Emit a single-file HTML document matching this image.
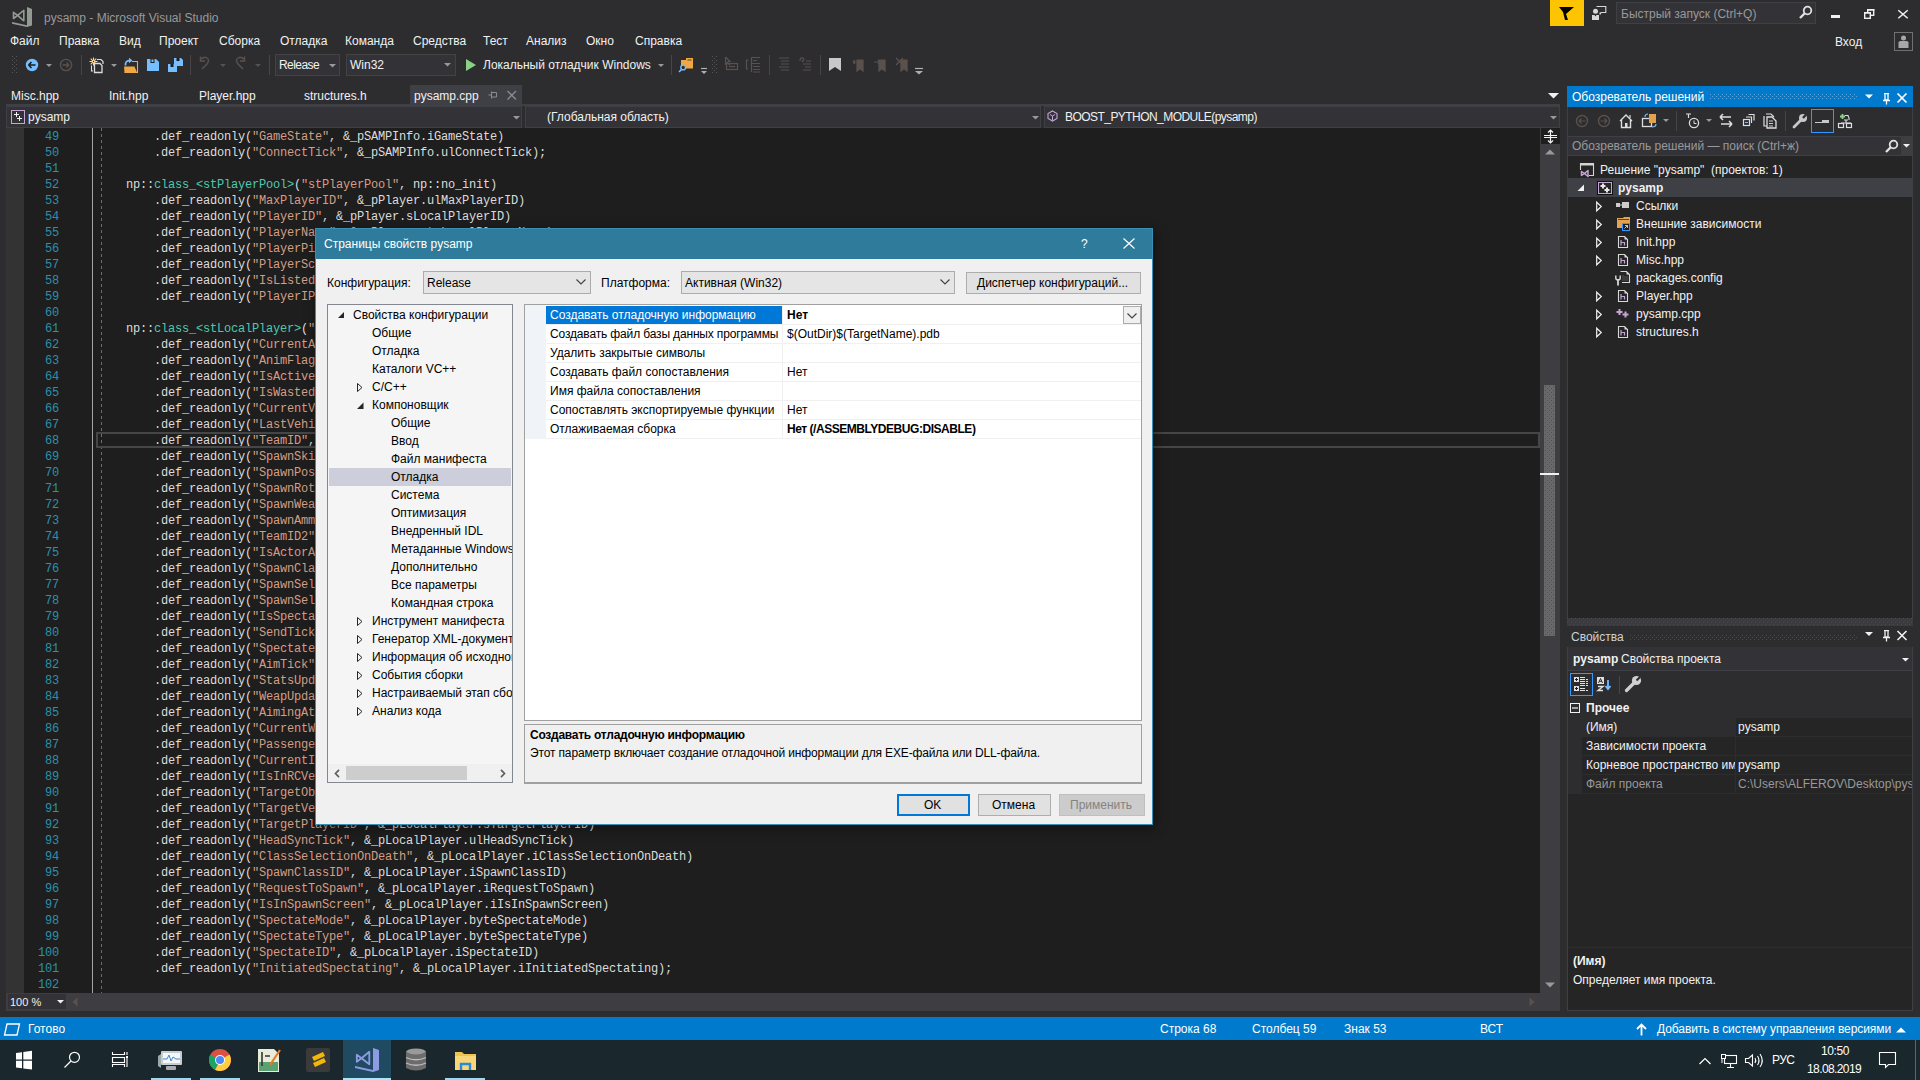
<!DOCTYPE html>
<html><head><meta charset="utf-8">
<style>
*{margin:0;padding:0;box-sizing:border-box}
html,body{width:1920px;height:1080px;overflow:hidden;background:#2d2d30;font-family:"Liberation Sans",sans-serif;font-size:12px;color:#f1f1f1}
.a{position:absolute}
.t{position:absolute;white-space:nowrap;line-height:14px}
.dk{color:#000}
#code{position:absolute;left:98px;top:129px;font-family:"Liberation Mono",monospace;font-size:12px;line-height:16px;white-space:pre;color:#dcdcdc;letter-spacing:-0.2px}
#code i{font-style:normal;color:#d69d85}
#code b{font-weight:normal;color:#4ec9b0}
#lnum{position:absolute;left:23px;width:36px;top:129px;font-family:"Liberation Mono",monospace;font-size:12px;line-height:16px;white-space:pre;color:#2b91af;text-align:right;letter-spacing:-0.2px}
</style></head><body>
<!-- ===== TITLE BAR ===== -->
<svg class="a" style="left:0;top:0" width="40" height="30" viewBox="0 0 40 30"><g fill="#919b91"><path d="M27 7 L32 9 V25.5 L27 27 Z"/><path d="M12 22 L27 25.3 V27 L12 23.7 Z"/></g><g fill="none" stroke="#919b91" stroke-width="1.6" stroke-linejoin="round"><path d="M13.5 12.3 V18.5 L17.6 15.3 Z"/><path d="M17.6 15.3 L23.8 10.3 V20.8 Z"/></g></svg>
<div class="t" style="left:44px;top:11px;color:#999999">pysamp - Microsoft Visual Studio</div>
<div class="a" style="left:1550px;top:0;width:34px;height:26px;background:#fdc501"></div>
<svg class="a" style="left:1559px;top:6px" width="16" height="15" viewBox="0 0 16 15"><path d="M0 1 H15 L7 8 L9 14 L6 14 L4 6 Z" fill="#000"/></svg>
<svg class="a" style="left:1590px;top:4px" width="20" height="18" viewBox="1590 4 20 18"><circle cx="1595.5" cy="11.3" r="2.5" fill="#d8d8d8"/><path d="M1592 15 H1594.5 L1595.5 16.5 L1596.5 15 H1599 V20 H1592 Z" fill="#d8d8d8"/><path d="M1596.5 6.5 H1605.8 V12.5 H1601 L1600 14.5 V12.5" fill="none" stroke="#d8d8d8" stroke-width="1.1"/></svg>
<div class="a" style="left:1616px;top:2px;width:200px;height:22px;background:#333337;border:1px solid #3f3f46"></div>
<div class="t" style="left:1621px;top:7px;color:#999999">Быстрый запуск (Ctrl+Q)</div>
<svg class="a" style="left:1799px;top:5px" width="14" height="14" viewBox="0 0 14 14"><circle cx="8.5" cy="5.5" r="3.8" fill="none" stroke="#e0e0e0" stroke-width="1.8"/><path d="M6 8 L1 13" stroke="#e0e0e0" stroke-width="2.4"/></svg>
<div class="a" style="left:1831px;top:15px;width:9px;height:3px;background:#f1f1f1"></div>
<svg class="a" style="left:1860px;top:5px" width="20" height="18" viewBox="1860 5 20 18"><rect x="1867.7" y="9.7" width="6" height="5.6" fill="none" stroke="#f1f1f1" stroke-width="1.4"/><rect x="1864.7" y="12.7" width="5.6" height="5.6" fill="#2d2d30" stroke="#f1f1f1" stroke-width="1.4"/><rect x="1867" y="9" width="7.4" height="1.6" fill="#f1f1f1"/><rect x="1864" y="12" width="7" height="1.6" fill="#f1f1f1"/></svg>
<svg class="a" style="left:1894px;top:6px" width="18" height="16" viewBox="1894 6 18 16"><path d="M1898.3 10.2 L1907.7 18.2 M1907.7 10.2 L1898.3 18.2" stroke="#f1f1f1" stroke-width="1.5"/></svg>
<div class="t" style="left:1835px;top:35px;color:#f1f1f1">Вход</div>
<div class="a" style="left:1894px;top:32px;width:19px;height:19px;border:1px solid #707070;background:#2d2d30"></div>
<svg class="a" style="left:1898px;top:35px" width="11" height="14" viewBox="0 0 11 14"><circle cx="5.5" cy="3" r="2.5" fill="#a8a8a8"/><path d="M0.5 13 V7.5 Q0.5 6 2.5 6 H8.5 Q10.5 6 10.5 7.5 V13 Z" fill="#a8a8a8"/></svg>
<!-- ===== MENU ===== -->
<div class="t" style="left:10px;top:34px">Файл</div>
<div class="t" style="left:59px;top:34px">Правка</div>
<div class="t" style="left:119px;top:34px">Вид</div>
<div class="t" style="left:159px;top:34px">Проект</div>
<div class="t" style="left:219px;top:34px">Сборка</div>
<div class="t" style="left:280px;top:34px">Отладка</div>
<div class="t" style="left:345px;top:34px">Команда</div>
<div class="t" style="left:413px;top:34px">Средства</div>
<div class="t" style="left:483px;top:34px">Тест</div>
<div class="t" style="left:526px;top:34px">Анализ</div>
<div class="t" style="left:586px;top:34px">Окно</div>
<div class="t" style="left:635px;top:34px">Справка</div>
<!-- ===== TOOLBAR ===== -->
<svg class="a" style="left:0;top:52px" width="930" height="26" viewBox="0 0 930 26">
 <g fill="#55555a"><rect x="12" y="4" width="1" height="1"/><rect x="16" y="4" width="1" height="1"/><rect x="14" y="6" width="1" height="1"/><rect x="12" y="8" width="1" height="1"/><rect x="16" y="8" width="1" height="1"/><rect x="14" y="10" width="1" height="1"/><rect x="12" y="12" width="1" height="1"/><rect x="16" y="12" width="1" height="1"/><rect x="14" y="14" width="1" height="1"/><rect x="12" y="16" width="1" height="1"/><rect x="16" y="16" width="1" height="1"/><rect x="14" y="18" width="1" height="1"/><rect x="12" y="20" width="1" height="1"/><rect x="16" y="20" width="1" height="1"/></g>
 <circle cx="32" cy="13" r="6.2" fill="#75beff"/><path d="M28.5 13 H35.5 M28.5 13 L31.5 10 M28.5 13 L31.5 16" stroke="#1e1e1e" stroke-width="1.6" fill="none"/>
 <path d="M46 12 H52 L49 15 Z" fill="#999"/>
 <circle cx="66" cy="13" r="5.6" fill="none" stroke="#5b514c" stroke-width="1.4"/><path d="M62.5 13 H69 M69 13 L66.5 10.5 M69 13 L66.5 15.5" stroke="#5b514c" stroke-width="1.3" fill="none"/>
 <rect x="81" y="3" width="1" height="20" fill="#46464a"/>
 <g stroke="#ffd890" stroke-width="1.1"><path d="M93.5 5.5 V13.5 M89.5 9.5 H97.5 M90.7 6.7 L96.3 12.3 M96.3 6.7 L90.7 12.3"/></g><circle cx="93.5" cy="9.5" r="1.8" fill="#ffd890"/><circle cx="93.5" cy="9.5" r="0.7" fill="#2d2d30"/>
 <path d="M97 7.5 H101 L103 9.5 V12" fill="none" stroke="#dcdcdc" stroke-width="1.2"/>
 <path d="M91.5 13.5 V19 H93" fill="none" stroke="#dcdcdc" stroke-width="1.1"/>
 <path d="M94.5 11.5 H100 L102 13.5 V20.5 H94.5 Z" fill="#2d2d30" stroke="#dcdcdc" stroke-width="1.3"/>
 <path d="M111 12 H117 L114 15 Z" fill="#999"/>
 <path d="M132 9.5 H137.5 V20.5 H124.5" fill="none" stroke="#f0a845" stroke-width="1.1"/><path d="M124 14.5 L125.5 14.5 H134.5 L137 20.5 H124.5 Z" fill="#f0a845"/>
 <path d="M125.5 13.5 Q125 8.5 130 8.5" fill="none" stroke="#75beff" stroke-width="1.8"/><path d="M129 5.8 L132.5 8.5 L129 11.2 Z" fill="#75beff"/>
 <path d="M147 7 H156 L159 10 V19 H147 Z" fill="#75beff"/><rect x="150.5" y="7" width="4" height="4" fill="#1e1e1e"/><rect x="151.5" y="7.5" width="2" height="2.5" fill="#75beff"/>
 <path d="M174 6 H181 L183 8 V14 H174 Z" fill="#75beff"/><rect x="176.5" y="6" width="3" height="3" fill="#1e1e1e"/>
 <path d="M168 12 H175 L177 14 V20 H168 Z" fill="#75beff"/><rect x="170.5" y="12" width="3" height="3" fill="#1e1e1e"/>
 <rect x="190" y="3" width="1" height="20" fill="#46464a"/>
 <path d="M202 17 L207 12 Q210 8 207 6 Q204 4 201.5 7 M200.5 4.5 V9 H205" fill="none" stroke="#5b514c" stroke-width="1.5"/>
 <path d="M220 12 H226 L223 15 Z" fill="#5b514c"/>
 <path d="M243 17 L238 12 Q235 8 238 6 Q241 4 243.5 7 M244.5 4.5 V9 H240" fill="none" stroke="#5b514c" stroke-width="1.5"/>
 <path d="M255 12 H261 L258 15 Z" fill="#5b514c"/>
 <rect x="269" y="3" width="1" height="20" fill="#46464a"/>
 <path d="M466 7 L476 13 L466 19 Z" fill="#89d185"/>
 <path d="M658 12 H664 L661 15 Z" fill="#999"/>
 <rect x="671" y="3" width="1" height="20" fill="#46464a"/>
 <path d="M681 8 H686 V16 H681 Z" fill="#f0a845"/><path d="M686 6 H693 V16.5 H686 Z" fill="#f0a845"/><path d="M687.5 8 H691.5" stroke="#2d2d30" stroke-width="0.8"/>
 <circle cx="683.2" cy="15.5" r="2.4" fill="#2d2d30" stroke="#75beff" stroke-width="1.4"/><path d="M681.5 17.5 L679 20" stroke="#75beff" stroke-width="1.6"/>
 <path d="M701 16.5 H707" stroke="#b0b0b0" stroke-width="1.2"/><path d="M701 19 H707 L704 22 Z" fill="#b0b0b0"/>
 <g fill="#55555a"><rect x="712" y="4" width="1" height="1"/><rect x="716" y="4" width="1" height="1"/><rect x="714" y="6" width="1" height="1"/><rect x="712" y="8" width="1" height="1"/><rect x="716" y="8" width="1" height="1"/><rect x="714" y="10" width="1" height="1"/><rect x="712" y="12" width="1" height="1"/><rect x="716" y="12" width="1" height="1"/><rect x="714" y="14" width="1" height="1"/><rect x="712" y="16" width="1" height="1"/><rect x="716" y="16" width="1" height="1"/><rect x="714" y="18" width="1" height="1"/><rect x="712" y="20" width="1" height="1"/><rect x="716" y="20" width="1" height="1"/></g>
 <g fill="none" stroke="#5b514c" stroke-width="1.2"><path d="M725.5 5 V12 L727.5 10.5 L730 13 M725.5 5 L730 9.5 H727.5"/><rect x="726.5" y="11.5" width="11" height="6"/><path d="M729 14.5 H735"/>
 <path d="M748.5 8 H746.5 V17 H748 M751.5 5 V20 M751.5 5.5 H760 M753 8.5 H757 M751.5 11.5 H760 M753 14.5 H760 M753 17.5 H760 M753 20 H760"/>
 <path d="M779 6 H789 M781 9 H789 M781 12 H789 M779 15 H789 M781 18 H789"/>
 <path d="M800 9 Q800 5 803 6 Q805 7 802 10 M803 12 H811 M805 15 H811 M803 18 H811 M806 9 H811"/></g>
 <rect x="769" y="3" width="1" height="20" fill="#46464a"/>
 <rect x="820" y="3" width="1" height="20" fill="#46464a"/>
 <path d="M829 6 H841 V19 L835 15 L829 19 Z" fill="#c8c8c8"/>
 <g fill="none" stroke="#5b514c" stroke-width="1.2"><path d="M857 8 H863 V19 L860 16.5 L857 19 Z" fill="#5b514c"/><path d="M853 10 H859 M853 10 L855 8 M853 10 L855 12"/>
 <path d="M879 8 H885 V19 L882 16.5 L879 19 Z" fill="#5b514c"/><path d="M874 10 H880 M880 10 L878 8 M880 10 L878 12"/>
 <path d="M901 8 H907 V19 L904 16.5 L901 19 Z" fill="#5b514c"/><path d="M896 6 L903 13 M903 6 L896 13"/></g>
 <path d="M915 16.5 H923" stroke="#b0b0b0" stroke-width="1.2"/><path d="M915 19 H923 L919 22.5 Z" fill="#b0b0b0"/>
</svg>
<div class="a" style="left:275px;top:54px;width:65px;height:22px;background:#333337;border:1px solid #434346"></div>
<div class="t" style="left:279px;top:58px;letter-spacing:-0.55px">Release</div>
<svg class="a" style="left:329px;top:64px" width="7" height="4"><path d="M0 0 H7 L3.5 3.5 Z" fill="#999"/></svg>
<div class="a" style="left:346px;top:54px;width:110px;height:22px;background:#333337;border:1px solid #434346"></div>
<div class="t" style="left:350px;top:58px">Win32</div>
<svg class="a" style="left:444px;top:63px" width="7" height="4"><path d="M0 0 H7 L3.5 3.5 Z" fill="#999"/></svg>
<div class="t" style="left:483px;top:58px">Локальный отладчик Windows</div>
<!-- ===== TABS ===== -->
<div class="t" style="left:11px;top:89px">Misc.hpp</div>
<div class="t" style="left:109px;top:89px">Init.hpp</div>
<div class="t" style="left:199px;top:89px">Player.hpp</div>
<div class="t" style="left:304px;top:89px">structures.h</div>
<div class="a" style="left:410px;top:85px;width:112px;height:21px;background:#3f3f46"></div>
<div class="t" style="left:414px;top:89px">pysamp.cpp</div>
<svg class="a" style="left:488px;top:90px" width="30" height="10" viewBox="0 0 30 10"><path d="M0.5 5 H3.5 M3.5 1.5 V8.5 M3.5 2.5 H8.5 V7 H3.5" fill="none" stroke="#8c8c8c" stroke-width="1"/><path d="M19.5 1 L28 9.5 M28 1 L19.5 9.5" stroke="#8c8c8c" stroke-width="1.3"/></svg>
<svg class="a" style="left:1548px;top:93px" width="11" height="6"><path d="M0 0 H11 L5.5 5.5 Z" fill="#f1f1f1"/></svg>
<div class="a" style="left:6px;top:104px;width:1554px;height:2px;background:#3f3f46"></div>
<!-- ===== NAV BAR ===== -->
<div class="a" style="left:6px;top:106px;width:516px;height:22px;background:#333337;border:1px solid #3f3f46"></div>
<div class="a" style="left:525px;top:106px;width:516px;height:22px;background:#333337;border:1px solid #3f3f46"></div>
<div class="a" style="left:1044px;top:106px;width:516px;height:22px;background:#333337;border:1px solid #3f3f46"></div>
<svg class="a" style="left:11px;top:110px" width="14" height="14" viewBox="0 0 14 14"><rect x="0.5" y="0.5" width="13" height="13" fill="none" stroke="#c5a5d6" stroke-width="1"/><path d="M3 4 H5 V2 H6 V4 H8 V5 H6 V7 H5 V5 H3 Z M6 8 H8 V6 H9 V8 H11 V9 H9 V11 H8 V9 H6 Z" fill="#f1f1f1"/></svg>
<div class="t" style="left:28px;top:110px">pysamp</div>
<svg class="a" style="left:513px;top:116px" width="7" height="4"><path d="M0 0 H7 L3.5 3.5 Z" fill="#999"/></svg>
<div class="t" style="left:547px;top:110px">(Глобальная область)</div>
<svg class="a" style="left:1032px;top:116px" width="7" height="4"><path d="M0 0 H7 L3.5 3.5 Z" fill="#999"/></svg>
<svg class="a" style="left:1047px;top:110px" width="11" height="12" viewBox="0 0 11 12"><path d="M5.5 1 L10 3.5 V8.5 L5.5 11 L1 8.5 V3.5 Z" fill="none" stroke="#c5a5d6" stroke-width="1.1"/><path d="M3 4.5 L5.5 6 L8 4.5 M5.5 6 V10" fill="none" stroke="#c5a5d6" stroke-width="1"/></svg>
<div class="t" style="left:1065px;top:110px;letter-spacing:-0.55px">BOOST_PYTHON_MODULE(pysamp)</div>
<svg class="a" style="left:1550px;top:116px" width="7" height="4"><path d="M0 0 H7 L3.5 3.5 Z" fill="#999"/></svg>

<!-- editor -->
<div class="a" style="left:6px;top:128px;width:1534px;height:865px;background:#1e1e1e"></div>
<div class="a" style="left:6px;top:128px;width:18px;height:865px;background:#333333"></div>
<div id="lnum">49
50
51
52
53
54
55
56
57
58
59
60
61
62
63
64
65
66
67
68
69
70
71
72
73
74
75
76
77
78
79
80
81
82
83
84
85
86
87
88
89
90
91
92
93
94
95
96
97
98
99
100
101
102</div>
<div id="code">        .def_readonly(<i>&quot;GameState&quot;</i>, &amp;_pSAMPInfo.iGameState)
        .def_readonly(<i>&quot;ConnectTick&quot;</i>, &amp;_pSAMPInfo.ulConnectTick);

    np::<b>class_&lt;stPlayerPool&gt;</b>(<i>&quot;stPlayerPool&quot;</i>, np::no_init)
        .def_readonly(<i>&quot;MaxPlayerID&quot;</i>, &amp;_pPlayer.ulMaxPlayerID)
        .def_readonly(<i>&quot;PlayerID&quot;</i>, &amp;_pPlayer.sLocalPlayerID)
        .def_readonly(<i>&quot;PlayerName&quot;</i>, &amp;_pPlayer.strLocalPlayerName)
        .def_readonly(<i>&quot;PlayerPing&quot;</i>, &amp;_pPlayer.iLocalPlayerPing)
        .def_readonly(<i>&quot;PlayerScore&quot;</i>, &amp;_pPlayer.iLocalPlayerScore)
        .def_readonly(<i>&quot;IsListed&quot;</i>, &amp;_pPlayer.iIsListed)
        .def_readonly(<i>&quot;PlayerIP&quot;</i>, &amp;_pPlayer.strLocalPlayerIP);

    np::<b>class_&lt;stLocalPlayer&gt;</b>(<i>&quot;stLocalPlayer&quot;</i>, np::no_init)
        .def_readonly(<i>&quot;CurrentAnimID&quot;</i>, &amp;_pLocalPlayer.iCurrentAnimID)
        .def_readonly(<i>&quot;AnimFlags&quot;</i>, &amp;_pLocalPlayer.iAnimFlags)
        .def_readonly(<i>&quot;IsActive&quot;</i>, &amp;_pLocalPlayer.iIsActive)
        .def_readonly(<i>&quot;IsWasted&quot;</i>, &amp;_pLocalPlayer.iIsWasted)
        .def_readonly(<i>&quot;CurrentVehicleID&quot;</i>, &amp;_pLocalPlayer.iCurrentVehicleID)
        .def_readonly(<i>&quot;LastVehicleID&quot;</i>, &amp;_pLocalPlayer.iLastVehicleID)
        .def_readonly(<i>&quot;TeamID&quot;</i>, &amp;_pLocalPlayer.iTeamID)
        .def_readonly(<i>&quot;SpawnSkin&quot;</i>, &amp;_pLocalPlayer.iSpawnSkin)
        .def_readonly(<i>&quot;SpawnPos&quot;</i>, &amp;_pLocalPlayer.iSpawnPos)
        .def_readonly(<i>&quot;SpawnRot&quot;</i>, &amp;_pLocalPlayer.iSpawnRot)
        .def_readonly(<i>&quot;SpawnWeapon&quot;</i>, &amp;_pLocalPlayer.iSpawnWeapon)
        .def_readonly(<i>&quot;SpawnAmmo&quot;</i>, &amp;_pLocalPlayer.iSpawnAmmo)
        .def_readonly(<i>&quot;TeamID2&quot;</i>, &amp;_pLocalPlayer.iTeamID2)
        .def_readonly(<i>&quot;IsActorActive&quot;</i>, &amp;_pLocalPlayer.iIsActorActive)
        .def_readonly(<i>&quot;SpawnClassLoaded&quot;</i>, &amp;_pLocalPlayer.iSpawnClassLoaded)
        .def_readonly(<i>&quot;SpawnSelectionTick&quot;</i>, &amp;_pLocalPlayer.iSpawnSelectionTick)
        .def_readonly(<i>&quot;SpawnSelectionStart&quot;</i>, &amp;_pLocalPlayer.iSpawnSelectionStart)
        .def_readonly(<i>&quot;IsSpectating&quot;</i>, &amp;_pLocalPlayer.iIsSpectating)
        .def_readonly(<i>&quot;SendTick&quot;</i>, &amp;_pLocalPlayer.iSendTick)
        .def_readonly(<i>&quot;SpectateTick&quot;</i>, &amp;_pLocalPlayer.iSpectateTick)
        .def_readonly(<i>&quot;AimTick&quot;</i>, &amp;_pLocalPlayer.iAimTick)
        .def_readonly(<i>&quot;StatsUpdateTick&quot;</i>, &amp;_pLocalPlayer.iStatsUpdateTick)
        .def_readonly(<i>&quot;WeapUpdateTick&quot;</i>, &amp;_pLocalPlayer.iWeapUpdateTick)
        .def_readonly(<i>&quot;AimingAtPlayer&quot;</i>, &amp;_pLocalPlayer.iAimingAtPlayer)
        .def_readonly(<i>&quot;CurrentWeapon&quot;</i>, &amp;_pLocalPlayer.iCurrentWeapon)
        .def_readonly(<i>&quot;PassengerDriveBy&quot;</i>, &amp;_pLocalPlayer.iPassengerDriveBy)
        .def_readonly(<i>&quot;CurrentInterior&quot;</i>, &amp;_pLocalPlayer.iCurrentInterior)
        .def_readonly(<i>&quot;IsInRCVehicle&quot;</i>, &amp;_pLocalPlayer.iIsInRCVehicle)
        .def_readonly(<i>&quot;TargetObjectID&quot;</i>, &amp;_pLocalPlayer.iTargetObjectID)
        .def_readonly(<i>&quot;TargetVehicleID&quot;</i>, &amp;_pLocalPlayer.iTargetVehicleID)
        .def_readonly(<i>&quot;TargetPlayerID&quot;</i>, &amp;_pLocalPlayer.sTargetPlayerID)
        .def_readonly(<i>&quot;HeadSyncTick&quot;</i>, &amp;_pLocalPlayer.ulHeadSyncTick)
        .def_readonly(<i>&quot;ClassSelectionOnDeath&quot;</i>, &amp;_pLocalPlayer.iClassSelectionOnDeath)
        .def_readonly(<i>&quot;SpawnClassID&quot;</i>, &amp;_pLocalPlayer.iSpawnClassID)
        .def_readonly(<i>&quot;RequestToSpawn&quot;</i>, &amp;_pLocalPlayer.iRequestToSpawn)
        .def_readonly(<i>&quot;IsInSpawnScreen&quot;</i>, &amp;_pLocalPlayer.iIsInSpawnScreen)
        .def_readonly(<i>&quot;SpectateMode&quot;</i>, &amp;_pLocalPlayer.byteSpectateMode)
        .def_readonly(<i>&quot;SpectateType&quot;</i>, &amp;_pLocalPlayer.byteSpectateType)
        .def_readonly(<i>&quot;SpectateID&quot;</i>, &amp;_pLocalPlayer.iSpectateID)
        .def_readonly(<i>&quot;InitiatedSpectating&quot;</i>, &amp;_pLocalPlayer.iInitiatedSpectating);
</div>
<!-- scrollbar -->
<div class="a" style="left:1540px;top:128px;width:20px;height:865px;background:#3e3e42"></div>
<!-- bottom bar -->
<div class="a" style="left:6px;top:993px;width:1554px;height:18px;background:#3e3e42"></div>
<!-- status bar -->
<div class="a" style="left:0;top:1017px;width:1920px;height:23px;background:#007acc"></div>
<!-- taskbar -->
<div class="a" style="left:0;top:1040px;width:1920px;height:40px;background:#1a272c"></div>
<!-- ===== SOLUTION EXPLORER ===== -->
<div class="a" style="left:1567px;top:86px;width:346px;height:21px;background:#007acc"></div>
<div class="t" style="left:1572px;top:90px;color:#ffffff">Обозреватель решений</div>
<svg class="a" style="left:1710px;top:94px" width="148" height="5"><defs><pattern id="pd1" width="4" height="4" patternUnits="userSpaceOnUse"><rect x="0" y="0" width="1" height="1" fill="#5fa3dc"/><rect x="2" y="2" width="1" height="1" fill="#5fa3dc"/></pattern></defs><rect width="148" height="5" fill="url(#pd1)"/></svg>
<svg class="a" style="left:1864px;top:93px" width="46" height="12" viewBox="0 0 46 12"><path d="M1 1.5 H9 L5 5.5 Z" fill="#fff"/><path d="M20 0.5 H25 M21 0.5 V7 H24 V0.5 M19 7.5 H26 M22.5 7.5 V11.5" fill="none" stroke="#fff" stroke-width="1.3"/><path d="M33.5 0.5 L42.5 9.5 M42.5 0.5 L33.5 9.5" stroke="#fff" stroke-width="1.6"/></svg>
<div class="a" style="left:1567px;top:107px;width:346px;height:511px;background:#252526;border-left:1px solid #3f3f46;border-right:1px solid #3f3f46"></div>
<div class="a" style="left:1568px;top:107px;width:344px;height:29px;background:#2d2d30"></div>
<svg class="a" style="left:1568px;top:107px" width="300" height="29" viewBox="1568 107 300 29">
 <circle cx="1582" cy="121" r="5.5" fill="none" stroke="#5b514c" stroke-width="1.4"/><path d="M1579 121 H1585.5 M1579 121 L1581.5 118.5 M1579 121 L1581.5 123.5" stroke="#5b514c" stroke-width="1.2" fill="none"/>
 <circle cx="1604" cy="121" r="5.5" fill="none" stroke="#5b514c" stroke-width="1.4"/><path d="M1600.5 121 H1607 M1607 121 L1604.5 118.5 M1607 121 L1604.5 123.5" stroke="#5b514c" stroke-width="1.2" fill="none"/>
 <path d="M1620 121 L1626 115 L1632 121 M1621.5 120 V127.5 H1630.5 V120" fill="none" stroke="#ddd" stroke-width="1.4"/><rect x="1625" y="123" width="2.5" height="4.5" fill="#ddd"/><path d="M1630 115 V118" stroke="#ddd" stroke-width="1.2"/>
 <rect x="1642.5" y="118.5" width="9" height="8" fill="none" stroke="#ddd" stroke-width="1.3"/><rect x="1649" y="114" width="7" height="9" fill="#e3a24e"/><path d="M1645 117 Q1645 114 1648 114" stroke="#75beff" stroke-width="1.2" fill="none"/><path d="M1656 124 Q1656 127 1652 127" stroke="#75beff" stroke-width="1.2" fill="none"/>
 <path d="M1663 119 H1669 L1666 122 Z" fill="#999"/>
 <rect x="1676" y="111" width="1" height="20" fill="#46464a"/>
 <circle cx="1694" cy="123" r="4.6" fill="none" stroke="#ddd" stroke-width="1.3"/><path d="M1694 120.5 V123.5 H1696.5" fill="none" stroke="#ddd" stroke-width="1"/><path d="M1686 114 H1691 M1688.5 114 V118" stroke="#ddd" stroke-width="1.2"/>
 <path d="M1706 119 H1712 L1709 122 Z" fill="#999"/>
 <path d="M1720 117 H1731 M1720 117 L1723 114 M1720 117 L1723 120 M1732 124 H1721 M1732 124 L1729 121 M1732 124 L1729 127" fill="none" stroke="#ddd" stroke-width="1.5"/>
 <rect x="1743.5" y="119.5" width="6" height="6" fill="none" stroke="#ddd" stroke-width="1.2"/><path d="M1746 117 H1751.5 V123 M1748.5 114.5 H1754 V120.5" fill="none" stroke="#ddd" stroke-width="1.2"/><path d="M1745 122.5 H1748" stroke="#75beff" stroke-width="1"/>
 <path d="M1764 116 V126 H1767 M1766 114 H1771 L1774 117" fill="none" stroke="#ddd" stroke-width="1.2"/><path d="M1767 117 H1772 L1776 121 V128 H1767 Z" fill="none" stroke="#ddd" stroke-width="1.3"/><path d="M1769 121 H1773 M1769 123.5 H1773 M1769 126 H1773" stroke="#ddd" stroke-width="0.9"/>
 <rect x="1785" y="111" width="1" height="20" fill="#46464a"/>
 <path d="M1794 127 L1800.5 120.5" stroke="#c8c8c8" stroke-width="2.8" stroke-linecap="round"/><circle cx="1803" cy="118" r="4" fill="#c8c8c8"/><path d="M1803 118 L1806 114.5" stroke="#2d2d30" stroke-width="2.4"/>
 <path d="M1815 122 H1822 V120 H1829 V123 H1815 Z" fill="#c8c8c8"/>
 <path d="M1840 116.5 H1845 M1842.5 114 V119" stroke="#8fd18f" stroke-width="1.8"/><path d="M1845 115.5 H1848 L1849 118 V120 M1844 120 H1848 M1846 120 V123 M1841 123 H1851" fill="none" stroke="#ddd" stroke-width="1.1"/><rect x="1838.5" y="123.5" width="5" height="4" fill="none" stroke="#ddd" stroke-width="1.2"/><rect x="1846.5" y="123.5" width="5" height="4" fill="none" stroke="#ddd" stroke-width="1.2"/>
</svg>
<div class="a" style="left:1811px;top:109px;width:23px;height:24px;border:1px solid #3399ff"></div>
<!-- search -->
<div class="a" style="left:1568px;top:136px;width:333px;height:20px;background:#333337;border-top:1px solid #3f3f46;border-bottom:1px solid #3f3f46"></div>
<div class="a" style="left:1901px;top:136px;width:12px;height:20px;background:#3e3e42"></div>
<div class="t" style="left:1572px;top:139px;color:#999999">Обозреватель решений — поиск (Ctrl+ж)</div>
<svg class="a" style="left:1885px;top:139px" width="14" height="14" viewBox="0 0 14 14"><circle cx="8.5" cy="5.5" r="3.8" fill="none" stroke="#e0e0e0" stroke-width="1.8"/><path d="M6 8 L1 13" stroke="#e0e0e0" stroke-width="2.4"/></svg>
<svg class="a" style="left:1903px;top:144px" width="7" height="4"><path d="M0 0 H7 L3.5 3.5 Z" fill="#f1f1f1"/></svg>
<!-- tree -->
<div class="a" style="left:1568px;top:178px;width:344px;height:19px;background:#3f3f46"></div>
<svg class="a" style="left:1568px;top:157px" width="100" height="185" viewBox="1568 157 100 185">
 <path d="M1580.5 170 V163.5 H1593.5 V175.5 H1589" fill="none" stroke="#d4d4d4" stroke-width="1.1"/><rect x="1581" y="163" width="12" height="2.5" fill="#d4d4d4"/>
 <path d="M1581.5 171.5 V175.5 L1584.5 173.5 Z M1584.5 173.5 L1588 170.5 V176.5 Z" fill="none" stroke="#c5a5d6" stroke-width="1.5" stroke-linejoin="round"/>
 <path d="M1577.5 191 H1584 V184.5 Z" fill="#f1f1f1"/>
 <rect x="1597" y="181" width="16" height="14" fill="#111"/><rect x="1598.5" y="182.5" width="13" height="11" fill="#262626" stroke="#c5a5d6" stroke-width="1"/>
 <g fill="#e8e8e8"><rect x="1600.5" y="185" width="5" height="2"/><rect x="1602" y="183.5" width="2" height="5"/><rect x="1604.5" y="189" width="5" height="2"/><rect x="1606" y="187.5" width="2" height="5"/></g>
 <g fill="none" stroke="#f1f1f1" stroke-width="1.2" stroke-linejoin="miter"><path d="M1596.7 202.2 L1601.3 206.5 L1596.7 210.8 Z"/><path d="M1596.7 220.2 L1601.3 224.5 L1596.7 228.8 Z"/><path d="M1596.7 238.2 L1601.3 242.5 L1596.7 246.8 Z"/><path d="M1596.7 256.2 L1601.3 260.5 L1596.7 264.8 Z"/><path d="M1596.7 292.2 L1601.3 296.5 L1596.7 300.8 Z"/><path d="M1596.7 310.2 L1601.3 314.5 L1596.7 318.8 Z"/><path d="M1596.7 328.2 L1601.3 332.5 L1596.7 336.8 Z"/></g>
 <rect x="1616" y="203" width="4" height="4" fill="#ccc"/><rect x="1620" y="204.5" width="2" height="1" fill="#ccc"/><rect x="1622" y="202" width="7" height="6" fill="#ccc"/>
 <path d="M1617 218 H1623 L1624 217 H1630 V228 H1617 Z" fill="#e3a24e"/><path d="M1618 219.5 H1629" stroke="#2d2d30" stroke-width="0.8"/><rect x="1622.5" y="223.5" width="7" height="7" fill="#1e1e1e" stroke="#3399ff" stroke-width="1"/><path d="M1624.5 228.5 L1627.5 225.5 M1625 225.5 H1627.5 V228" stroke="#f1f1f1" stroke-width="0.8" fill="none"/>
 <path d="M1618.5 236.5 H1624.5 L1627.5 239.5 V247.5 H1618.5 Z" fill="none" stroke="#d8d8d8" stroke-width="1.1"/><path d="M1624.5 236.5 V239.5 H1627.5 Z" fill="#d8d8d8"/><path d="M1621 240.0 V245.5 M1621 242.5 H1624.5 V245.5" fill="none" stroke="#c5a5d6" stroke-width="1.2"/><path d="M1618.5 254.5 H1624.5 L1627.5 257.5 V265.5 H1618.5 Z" fill="none" stroke="#d8d8d8" stroke-width="1.1"/><path d="M1624.5 254.5 V257.5 H1627.5 Z" fill="#d8d8d8"/><path d="M1621 258.0 V263.5 M1621 260.5 H1624.5 V263.5" fill="none" stroke="#c5a5d6" stroke-width="1.2"/><path d="M1618.5 290.5 H1624.5 L1627.5 293.5 V301.5 H1618.5 Z" fill="none" stroke="#d8d8d8" stroke-width="1.1"/><path d="M1624.5 290.5 V293.5 H1627.5 Z" fill="#d8d8d8"/><path d="M1621 294.0 V299.5 M1621 296.5 H1624.5 V299.5" fill="none" stroke="#c5a5d6" stroke-width="1.2"/><path d="M1618.5 326.5 H1624.5 L1627.5 329.5 V337.5 H1618.5 Z" fill="none" stroke="#d8d8d8" stroke-width="1.1"/><path d="M1624.5 326.5 V329.5 H1627.5 Z" fill="#d8d8d8"/><path d="M1621 330.0 V335.5 M1621 332.5 H1624.5 V335.5" fill="none" stroke="#c5a5d6" stroke-width="1.2"/>
 <path d="M1620.5 271.5 H1626.5 L1629.5 274.5 V282.5 H1622" fill="none" stroke="#d8d8d8" stroke-width="1.1"/><path d="M1626.5 271.5 V274.5 H1629.5 Z" fill="#d8d8d8"/><path d="M1623 275 V281 M1625 276 V281 M1627 276 V281" stroke="#5a5a5a" stroke-width="0.9"/><path d="M1618 279 V285.5" stroke="#d8d8d8" stroke-width="1.8"/><path d="M1615.8 275.5 V278 Q1615.8 280 1618 280 Q1620.2 280 1620.2 278 V275.5" fill="none" stroke="#d8d8d8" stroke-width="1.4"/>
 <g fill="#c5a5d6"><rect x="1616.5" y="311" width="6" height="2"/><rect x="1618.5" y="309" width="2" height="6"/><rect x="1622.5" y="313.5" width="6" height="2"/><rect x="1624.5" y="311.5" width="2" height="6"/></g>
</svg>
<div class="t" style="left:1600px;top:163px">Решение "pysamp"&nbsp; (проектов: 1)</div>
<div class="t" style="left:1618px;top:181px;font-weight:bold">pysamp</div>
<div class="t" style="left:1636px;top:199px">Ссылки</div>
<div class="t" style="left:1636px;top:217px">Внешние зависимости</div>
<div class="t" style="left:1636px;top:235px">Init.hpp</div>
<div class="t" style="left:1636px;top:253px">Misc.hpp</div>
<div class="t" style="left:1636px;top:271px">packages.config</div>
<div class="t" style="left:1636px;top:289px">Player.hpp</div>
<div class="t" style="left:1636px;top:307px">pysamp.cpp</div>
<div class="t" style="left:1636px;top:325px">structures.h</div>
<!-- splitter -->
<svg class="a" style="left:1567px;top:618px" width="346" height="8"><defs><pattern id="pd3" width="4" height="4" patternUnits="userSpaceOnUse"><rect width="4" height="4" fill="#3b3b3f"/><rect x="0" y="0" width="1" height="1" fill="#4a4a4f"/><rect x="2" y="2" width="1" height="1" fill="#4a4a4f"/></pattern></defs><rect width="346" height="8" fill="url(#pd3)"/></svg>
<!-- ===== PROPERTIES ===== -->
<div class="t" style="left:1571px;top:630px;color:#d0d0d0">Свойства</div>
<svg class="a" style="left:1630px;top:635px" width="227" height="5"><defs><pattern id="pd2" width="4" height="4" patternUnits="userSpaceOnUse"><rect x="0" y="0" width="1" height="1" fill="#4a4a50"/><rect x="2" y="2" width="1" height="1" fill="#4a4a50"/></pattern></defs><rect width="227" height="5" fill="url(#pd2)"/></svg>
<svg class="a" style="left:1864px;top:630px" width="46" height="12" viewBox="0 0 46 12"><path d="M1 2 H9 L5 6 Z" fill="#f1f1f1"/><path d="M20 0.5 H25 M21 0.5 V7 H24 V0.5 M19 7.5 H26 M22.5 7.5 V11.5" fill="none" stroke="#f1f1f1" stroke-width="1.3"/><path d="M33.5 1 L42.5 10 M42.5 1 L33.5 10" stroke="#f1f1f1" stroke-width="1.6"/></svg>
<div class="a" style="left:1567px;top:647px;width:346px;height:364px;background:#252526;border:1px solid #3f3f46;border-top:none"></div>
<div class="a" style="left:1568px;top:647px;width:344px;height:24px;background:#333337;border-bottom:1px solid #3f3f46"></div>
<div class="t" style="left:1573px;top:652px;font-weight:bold">pysamp</div>
<div class="t" style="left:1621px;top:652px">Свойства проекта</div>
<svg class="a" style="left:1902px;top:658px" width="7" height="4"><path d="M0 0 H7 L3.5 3.5 Z" fill="#f1f1f1"/></svg>
<div class="a" style="left:1568px;top:671px;width:344px;height:26px;background:#2d2d30"></div>
<div class="a" style="left:1570px;top:673px;width:23px;height:23px;border:1px solid #3399ff"></div>
<svg class="a" style="left:1570px;top:673px" width="80" height="23" viewBox="1570 673 80 23">
 <rect x="1574" y="677" width="5" height="5" fill="#e0e0e0"/><rect x="1574" y="686" width="5" height="5" fill="#e0e0e0"/>
 <path d="M1576.5 678 V681 M1575 679.5 H1578 M1576.5 687 V690 M1575 688.5 H1578" stroke="#1e1e1e" stroke-width="1"/>
 <g fill="#e0e0e0"><rect x="1580" y="677" width="5" height="1"/><rect x="1580" y="679" width="5" height="1"/><rect x="1580" y="681" width="5" height="1"/><rect x="1580" y="683" width="5" height="1"/><rect x="1580" y="685" width="5" height="1"/><rect x="1586" y="679" width="2" height="1"/><rect x="1586" y="681" width="2" height="1"/><rect x="1586" y="683" width="2" height="1"/><rect x="1586" y="685" width="2" height="1"/><rect x="1580" y="688" width="5" height="1"/><rect x="1580" y="690" width="5" height="1"/><rect x="1586" y="690" width="2" height="1"/></g>
 <rect x="1597" y="677" width="7" height="7" fill="#e0e0e0"/><path d="M1598.5 683 L1600.5 678.5 L1602.5 683 M1599.3 681.3 H1601.7" fill="none" stroke="#1e1e1e" stroke-width="0.9"/>
 <path d="M1598 686.5 H1603 L1598 690.5 H1603" fill="none" stroke="#e0e0e0" stroke-width="1.4"/>
 <path d="M1608 680 V688 M1605.5 686 L1608 689 L1610.5 686" fill="none" stroke="#75beff" stroke-width="1.8"/>
 <rect x="1619" y="676" width="1" height="18" fill="#46464a"/>
 <path d="M1626.5 690.5 L1634 683" stroke="#d0d0d0" stroke-width="3.2" stroke-linecap="round"/><circle cx="1636.5" cy="680.5" r="4.6" fill="#d0d0d0"/><path d="M1636.5 680.5 L1640 677" stroke="#2d2d30" stroke-width="2.2"/>
</svg>
<!-- grid -->
<div class="a" style="left:1568px;top:697px;width:344px;height:97px;background:#2d2d30"></div>
<svg class="a" style="left:1570px;top:703px" width="10" height="10"><rect x="0.5" y="0.5" width="9" height="9" fill="none" stroke="#f1f1f1"/><path d="M2 5 H8" stroke="#f1f1f1" stroke-width="1.2"/></svg>
<div class="t" style="left:1586px;top:701px;font-weight:bold">Прочее</div>
<div class="a" style="left:1736px;top:718px;width:176px;height:18px;background:#252526"></div>
<div class="a" style="left:1582px;top:737px;width:153px;height:18px;background:#252526"></div>
<div class="a" style="left:1736px;top:737px;width:176px;height:18px;background:#252526"></div>
<div class="a" style="left:1582px;top:756px;width:153px;height:18px;background:#252526"></div>
<div class="a" style="left:1736px;top:756px;width:176px;height:18px;background:#252526"></div>
<div class="a" style="left:1582px;top:775px;width:153px;height:18px;background:#252526"></div>
<div class="a" style="left:1736px;top:775px;width:176px;height:18px;background:#252526"></div>
<div class="t" style="left:1586px;top:720px">(Имя)</div>
<div class="t" style="left:1738px;top:720px">pysamp</div>
<div class="t" style="left:1586px;top:739px">Зависимости проекта</div>
<div class="a" style="left:1582px;top:756px;width:153px;height:18px;overflow:hidden"><div class="t" style="left:4px;top:2px">Корневое пространство имен</div></div>
<div class="t" style="left:1738px;top:758px">pysamp</div>
<div class="t" style="left:1586px;top:777px;color:#999999">Файл проекта</div>
<div class="a" style="left:1736px;top:775px;width:176px;height:18px;overflow:hidden"><div class="t" style="left:2px;top:2px;color:#999999">C:\Users\ALFEROV\Desktop\pysamp\pysamp.vcxproj</div></div>
<div class="a" style="left:1568px;top:947px;width:344px;height:1px;background:#2d2d30"></div>
<div class="t" style="left:1573px;top:954px;font-weight:bold">(Имя)</div>
<div class="t" style="left:1573px;top:973px">Определяет имя проекта.</div>

<!-- ===== EDITOR EXTRAS ===== -->
<div class="a" style="left:92px;top:128px;width:1px;height:865px;background:#a5a5a5"></div>
<div class="a" style="left:101px;top:128px;width:1px;height:865px;background:repeating-linear-gradient(to bottom,#6e6e6e 0,#6e6e6e 3px,transparent 3px,transparent 6px)"></div>
<div class="a" style="left:96px;top:432px;width:1444px;height:16px;border:2px solid #464646;border-right-width:2px"></div>
<!-- v scrollbar -->
<div class="a" style="left:1541px;top:128px;width:19px;height:16px;background:#1e1e1e"></div>
<svg class="a" style="left:1543px;top:129px" width="15" height="15" viewBox="0 0 15 15"><path d="M7.5 1 V14 M5 3.5 L7.5 1 L10 3.5 M5 11.5 L7.5 14 L10 11.5" fill="none" stroke="#f1f1f1" stroke-width="1.2"/><path d="M1 6.5 H14 M1 8.5 H14" stroke="#f1f1f1" stroke-width="1.2"/></svg>
<svg class="a" style="left:1545px;top:149px" width="10" height="6"><path d="M0 5.5 H10 L5 0.5 Z" fill="#999"/></svg>
<svg class="a" style="left:1544px;top:385px" width="11" height="251"><defs><pattern id="pd4" width="4" height="4" patternUnits="userSpaceOnUse"><rect width="4" height="4" fill="#686868"/><rect x="1" y="1" width="1" height="1" fill="#55504d"/><rect x="3" y="3" width="1" height="1" fill="#55504d"/></pattern></defs><rect width="11" height="251" fill="url(#pd4)"/></svg>
<div class="a" style="left:1540px;top:473px;width:19px;height:2px;background:#f1f1f1"></div>
<svg class="a" style="left:1545px;top:982px" width="10" height="6"><path d="M0 0.5 H10 L5 5.5 Z" fill="#999"/></svg>
<!-- bottom bar -->
<div class="a" style="left:8px;top:994px;width:58px;height:15px;background:#333337"></div>
<div class="t" style="left:10px;top:995px;color:#f1f1f1;font-size:11px">100 %</div>
<svg class="a" style="left:57px;top:1000px" width="7" height="4"><path d="M0 0 H7 L3.5 3.5 Z" fill="#f1f1f1"/></svg>
<svg class="a" style="left:72px;top:997px" width="6" height="10"><path d="M5.5 0.5 L0.5 5 L5.5 9.5 Z" fill="#5b514c"/></svg>
<svg class="a" style="left:1529px;top:997px" width="6" height="10"><path d="M0.5 0.5 L5.5 5 L0.5 9.5 Z" fill="#5b514c"/></svg>
<!-- ===== STATUS BAR ===== -->
<svg class="a" style="left:3px;top:1023px" width="18" height="13" viewBox="0 0 18 13"><path d="M4 1 H16.5 L14 12 H1.5 Z" fill="none" stroke="#fff" stroke-width="1.3"/></svg>
<div class="t" style="left:28px;top:1022px;color:#fff">Готово</div>
<div class="t" style="left:1160px;top:1022px;color:#fff">Строка 68</div>
<div class="t" style="left:1252px;top:1022px;color:#fff">Столбец 59</div>
<div class="t" style="left:1344px;top:1022px;color:#fff">Знак 53</div>
<div class="t" style="left:1480px;top:1022px;color:#fff">ВСТ</div>
<svg class="a" style="left:1636px;top:1023px" width="11" height="13" viewBox="0 0 11 13"><path d="M5.5 12.5 V2 M1 6 L5.5 1.5 L10 6" fill="none" stroke="#fff" stroke-width="1.8"/></svg>
<div class="t" style="left:1657px;top:1022px;color:#fff;letter-spacing:-0.08px">Добавить в систему управления версиями</div>
<svg class="a" style="left:1896px;top:1027px" width="10" height="6"><path d="M0 5.5 H10 L5 0.5 Z" fill="#fff"/></svg>
<!-- ===== TASKBAR ===== -->
<svg class="a" style="left:0;top:1040px" width="1920" height="40" viewBox="0 1040 1920 40">
 <path d="M16 1053 L22 1052.2 V1059.6 H16 Z M23.3 1052 L32 1050.8 V1059.6 H23.3 Z M16 1060.8 H22 V1068.2 L16 1067.4 Z M23.3 1060.8 H32 V1069.5 L23.3 1068.4 Z" fill="#fff"/>
 <circle cx="74.5" cy="1057.3" r="5" fill="none" stroke="#fff" stroke-width="1.2"/><path d="M71 1061 L64.5 1067.5" stroke="#fff" stroke-width="1.3"/>
 <path d="M112.5 1052 V1054.5 H124.5 V1052 M112.5 1067 V1064.5 H124.5 V1067" fill="none" stroke="#fff" stroke-width="1.1"/><rect x="112.5" y="1057.5" width="12" height="5" fill="none" stroke="#fff" stroke-width="1.1"/><path d="M127 1052 V1055 M127 1058 V1067" stroke="#fff" stroke-width="1.1"/><rect x="126" y="1056" width="2" height="2" fill="#fff"/>
 <rect x="161" y="1051" width="21" height="14" rx="1" fill="#c8cdd2"/><rect x="163" y="1053" width="17" height="10" fill="#f4f6f8"/><path d="M163 1059 L167 1059 L169 1055 L171 1061 L173 1057 L176 1059 H180" fill="none" stroke="#3a8ad8" stroke-width="1"/><path d="M158 1056 L161 1054 V1068 L158 1066 Z" fill="#9aa"/><rect x="166" y="1066" width="10" height="4" rx="1" fill="#a8acb0"/>
 <circle cx="220" cy="1060" r="11" fill="#dd5144"/><path d="M220 1060 L229.5 1054.5 A11 11 0 0 1 215 1069.8 Z" fill="#ffcd40"/><path d="M220 1060 L215 1069.8 A11 11 0 0 1 210.5 1054.5 Z" fill="#1da462"/><circle cx="220" cy="1060" r="5" fill="#fff"/><circle cx="220" cy="1060" r="4" fill="#4a8af4"/>
 <path d="M258 1049 H274 L279 1054 V1072 H258 Z" fill="#e8ecd8"/><rect x="259" y="1062" width="19" height="9" fill="#5aa070"/><path d="M262 1052 V1066 M265 1056 H270" stroke="#333" stroke-width="1.6"/><path d="M270 1065 L280 1050" stroke="#e87b2a" stroke-width="2.2"/>
 <rect x="306" y="1048" width="24" height="24" rx="2" fill="#3b3a3a"/><path d="M312 1057 L323 1052 L325 1056 L314 1061 Z M313 1063 L324 1058 L326 1062 L315 1067 Z" fill="#f2b807"/>
 <rect x="343" y="1040" width="48" height="40" fill="#1f4a61"/>
 <g fill="#8d9be3"><path d="M373 1048 L379 1050 V1070 L373 1072 Z"/><path d="M355 1066 L373 1070 V1072 L355 1067.9 Z"/></g><g fill="none" stroke="#8d9be3" stroke-width="1.8" stroke-linejoin="round"><path d="M356.8 1054.8 V1061.8 L361.5 1058.2 Z"/><path d="M361.5 1058.2 L369.3 1051.8 V1064.3 Z"/></g>
 <ellipse cx="416" cy="1052" rx="10" ry="3.5" fill="#9a9a9a"/><path d="M406 1052 V1068 Q416 1073 426 1068 V1052 Q416 1057 406 1052 Z" fill="#6c6c6c"/><path d="M406 1057.5 Q416 1062 426 1057.5 M406 1063 Q416 1067.5 426 1063" stroke="#bdbdbd" stroke-width="1.3" fill="none"/>
 <path d="M455 1052 H462 L464 1054 H476 V1070 H455 Z" fill="#f0c34e"/><path d="M455 1056 H476 V1070 H455 Z" fill="#f7d77a"/><path d="M461 1070 V1064 H470 V1070" fill="none" stroke="#2a8ad8" stroke-width="2.4"/>
 <rect x="151" y="1078" width="40" height="2" fill="#99d9f2"/><rect x="200" y="1078" width="40" height="2" fill="#99d9f2"/><rect x="343" y="1078" width="48" height="2" fill="#a8e6f8"/><rect x="445" y="1078" width="40" height="2" fill="#99d9f2"/>
 <path d="M1699.5 1064 L1705 1058.5 L1710.5 1064" fill="none" stroke="#fff" stroke-width="1.2"/>
 <rect x="1724.5" y="1055.5" width="12" height="8" fill="none" stroke="#fff" stroke-width="1.1"/><path d="M1730.5 1063.5 V1067 M1727 1067.5 H1734" stroke="#fff" stroke-width="1.1"/><rect x="1721.5" y="1054.5" width="4" height="4" fill="#1b262d" stroke="#fff" stroke-width="1"/><path d="M1722 1058 V1063" stroke="#fff"/>
 <path d="M1745.5 1058.5 H1748.5 L1752.5 1055 V1066 L1748.5 1062.5 H1745.5 Z" fill="none" stroke="#fff" stroke-width="1.1"/><path d="M1755 1058 Q1756.5 1060.5 1755 1063 M1757.5 1056 Q1760.5 1060.5 1757.5 1065 M1760 1054 Q1764.5 1060.5 1760 1067" fill="none" stroke="#fff" stroke-width="1.1"/>
 <path d="M1879.5 1052.5 H1895.5 V1064.5 H1888.5 L1885.5 1067.5 V1064.5 H1879.5 Z" fill="none" stroke="#fff" stroke-width="1.1"/>
 <rect x="1915" y="1040" width="1" height="40" fill="#5d666c"/>
</svg>
<div class="t" style="left:1772px;top:1053px;color:#fff;letter-spacing:-0.6px">РУС</div>
<div class="t" style="left:1821px;top:1044px;color:#fff;letter-spacing:-0.4px">10:50</div>
<div class="t" style="left:1807px;top:1062px;color:#fff;letter-spacing:-0.6px">18.08.2019</div>

<!-- ===== DIALOG ===== -->
<div class="a" style="left:315px;top:228px;width:838px;height:597px;background:#f0f0f0;border:1px solid #3a8fb7;box-shadow:2px 3px 12px rgba(0,0,0,0.45)"></div>
<div class="a" style="left:316px;top:229px;width:836px;height:30px;background:#2e7b9b"></div>
<div class="t dl" style="left:324px;top:237px;color:#ffffff">Страницы свойств pysamp</div>
<div class="t" style="left:1081px;top:237px;color:#ffffff">?</div>
<svg class="a" style="left:1123px;top:238px" width="12" height="11" viewBox="0 0 12 11"><path d="M0.5 0.5 L11.5 10.5 M11.5 0.5 L0.5 10.5" stroke="#fff" stroke-width="1.2"/></svg>
<div class="t dk" style="left:327px;top:276px">Конфигурация:</div>
<div class="a" style="left:423px;top:271px;width:168px;height:23px;background:#e5e5e5;border:1px solid #acacac"></div>
<div class="t dk" style="left:427px;top:276px">Release</div>
<svg class="a" style="left:576px;top:279px" width="10" height="6"><path d="M0.5 0.5 L5 5 L9.5 0.5" fill="none" stroke="#404040" stroke-width="1.1"/></svg>
<div class="t dk" style="left:601px;top:276px">Платформа:</div>
<div class="a" style="left:681px;top:271px;width:274px;height:23px;background:#e5e5e5;border:1px solid #acacac"></div>
<div class="t dk" style="left:685px;top:276px">Активная (Win32)</div>
<svg class="a" style="left:940px;top:279px" width="10" height="6"><path d="M0.5 0.5 L5 5 L9.5 0.5" fill="none" stroke="#404040" stroke-width="1.1"/></svg>
<div class="a" style="left:966px;top:272px;width:175px;height:22px;background:#e1e1e1;border:1px solid #adadad"></div>
<div class="t dk" style="left:977px;top:276px">Диспетчер конфигураций...</div>
<!-- left tree -->
<div class="a" style="left:327px;top:304px;width:186px;height:479px;background:#f5f5f5;border:1px solid #828790;overflow:hidden">
 <div class="a" style="left:1px;top:163px;width:182px;height:18px;background:#cccedb"></div>
 <svg class="a" style="left:0;top:0" width="60" height="420" viewBox="328 305 60 420">
  <path d="M338 318 H344 V312 Z" fill="#262626"/>
  <path d="M357.5 383.5 L362 387.5 L357.5 391.5 Z" fill="none" stroke="#262626" stroke-width="1"/>
  <path d="M357 409 H363.5 V402.5 Z" fill="#262626"/>
  <g fill="none" stroke="#262626" stroke-width="1"><path d="M357.5 617.5 L362 621.5 L357.5 625.5 Z"/><path d="M357.5 635.5 L362 639.5 L357.5 643.5 Z"/><path d="M357.5 653.5 L362 657.5 L357.5 661.5 Z"/><path d="M357.5 671.5 L362 675.5 L357.5 679.5 Z"/><path d="M357.5 689.5 L362 693.5 L357.5 697.5 Z"/><path d="M357.5 707.5 L362 711.5 L357.5 715.5 Z"/></g>
 </svg>
 <div class="t dk" style="left:25px;top:3px">Свойства конфигурации</div>
 <div class="t dk" style="left:44px;top:21px">Общие</div>
 <div class="t dk" style="left:44px;top:39px">Отладка</div>
 <div class="t dk" style="left:44px;top:57px">Каталоги VC++</div>
 <div class="t dk" style="left:44px;top:75px">C/C++</div>
 <div class="t dk" style="left:44px;top:93px">Компоновщик</div>
 <div class="t dk" style="left:63px;top:111px">Общие</div>
 <div class="t dk" style="left:63px;top:129px">Ввод</div>
 <div class="t dk" style="left:63px;top:147px">Файл манифеста</div>
 <div class="t dk" style="left:63px;top:165px">Отладка</div>
 <div class="t dk" style="left:63px;top:183px">Система</div>
 <div class="t dk" style="left:63px;top:201px">Оптимизация</div>
 <div class="t dk" style="left:63px;top:219px">Внедренный IDL</div>
 <div class="t dk" style="left:63px;top:237px">Метаданные Windows</div>
 <div class="t dk" style="left:63px;top:255px">Дополнительно</div>
 <div class="t dk" style="left:63px;top:273px">Все параметры</div>
 <div class="t dk" style="left:63px;top:291px">Командная строка</div>
 <div class="t dk" style="left:44px;top:309px">Инструмент манифеста</div>
 <div class="t dk" style="left:44px;top:327px">Генератор XML-документов</div>
 <div class="t dk" style="left:44px;top:345px">Информация об исходном коде</div>
 <div class="t dk" style="left:44px;top:363px">События сборки</div>
 <div class="t dk" style="left:44px;top:381px">Настраиваемый этап сборки</div>
 <div class="t dk" style="left:44px;top:399px">Анализ кода</div>
 <div class="a" style="left:0;top:459px;width:184px;height:18px;background:#f0f0f0"></div>
 <div class="a" style="left:18px;top:461px;width:121px;height:14px;background:#cdcdcd"></div>
 <svg class="a" style="left:6px;top:464px" width="172" height="9" viewBox="0 0 172 9"><path d="M5 0.8 L1.5 4.5 L5 8.2" fill="none" stroke="#606060" stroke-width="1.7"/><path d="M167 0.8 L170.5 4.5 L167 8.2" fill="none" stroke="#606060" stroke-width="1.7"/></svg>
</div>
<!-- property grid -->
<div class="a" style="left:524px;top:304px;width:618px;height:417px;background:#ffffff;border:1px solid #a0a0a0;overflow:hidden">
 <div class="a" style="left:0;top:0;width:21px;height:134px;background:#f0f4f9"></div>
 <div class="a" style="left:21px;top:1px;width:236px;height:18px;background:#0078d7"></div>
 <div class="a" style="left:21px;top:19px;width:595px;height:1px;background:#f0f0f0"></div>
 <div class="a" style="left:21px;top:38px;width:595px;height:1px;background:#f0f0f0"></div>
 <div class="a" style="left:21px;top:57px;width:595px;height:1px;background:#f0f0f0"></div>
 <div class="a" style="left:21px;top:76px;width:595px;height:1px;background:#f0f0f0"></div>
 <div class="a" style="left:21px;top:95px;width:595px;height:1px;background:#f0f0f0"></div>
 <div class="a" style="left:21px;top:114px;width:595px;height:1px;background:#f0f0f0"></div>
 <div class="a" style="left:21px;top:133px;width:595px;height:1px;background:#f0f0f0"></div>
 <div class="a" style="left:257px;top:0;width:1px;height:134px;background:#f0f0f0"></div>
 <div class="a" style="left:21px;top:0;width:236px;height:134px;overflow:hidden">
  <div class="t" style="left:4px;top:3px;color:#fff">Создавать отладочную информацию</div>
  <div class="t" style="left:4px;top:22px;color:#000;letter-spacing:-0.15px">Создавать файл базы данных программы</div>
  <div class="t" style="left:4px;top:41px;color:#000">Удалить закрытые символы</div>
  <div class="t" style="left:4px;top:60px;color:#000">Создавать файл сопоставления</div>
  <div class="t" style="left:4px;top:79px;color:#000">Имя файла сопоставления</div>
  <div class="t" style="left:4px;top:98px;color:#000">Сопоставлять экспортируемые функции</div>
  <div class="t" style="left:4px;top:117px;color:#000">Отлаживаемая сборка</div>
 </div>
 <div class="a" style="left:258px;top:1px;width:340px;height:18px;background:#fff"></div>
 <div class="t dk" style="left:262px;top:3px;font-weight:bold">Нет</div>
 <div class="t dk" style="left:262px;top:22px">$(OutDir)$(TargetName).pdb</div>
 <div class="t dk" style="left:262px;top:60px">Нет</div>
 <div class="t dk" style="left:262px;top:98px">Нет</div>
 <div class="t dk" style="left:262px;top:117px;font-weight:bold;letter-spacing:-0.46px">Нет (/ASSEMBLYDEBUG:DISABLE)</div>
 <div class="a" style="left:598px;top:1px;width:18px;height:18px;background:#f0f0f0;border:1px solid #acacac"></div>
 <svg class="a" style="left:602px;top:8px" width="10" height="6"><path d="M0.5 0.5 L5 5 L9.5 0.5" fill="none" stroke="#404040" stroke-width="1.1"/></svg>
</div>
<!-- description -->
<div class="a" style="left:524px;top:724px;width:618px;height:60px;background:#f0f0f0;border:1px solid #a0a0a0;border-bottom-width:2px"></div>
<div class="t dk" style="left:530px;top:728px;font-weight:bold;letter-spacing:-0.25px">Создавать отладочную информацию</div>
<div class="t dk" style="left:530px;top:746px;letter-spacing:-0.145px">Этот параметр включает создание отладочной информации для EXE-файла или DLL-файла.</div>
<!-- buttons -->
<div class="a" style="left:897px;top:794px;width:73px;height:22px;background:#e1e1e1;border:2px solid #0078d7"></div>
<div class="t dk" style="left:924px;top:798px">OK</div>
<div class="a" style="left:978px;top:794px;width:73px;height:22px;background:#e1e1e1;border:1px solid #adadad"></div>
<div class="t dk" style="left:992px;top:798px">Отмена</div>
<div class="a" style="left:1059px;top:794px;width:86px;height:22px;background:#cccccc;border:1px solid #bfbfbf"></div>
<div class="t" style="left:1070px;top:798px;color:#838383">Применить</div>

</body></html>
